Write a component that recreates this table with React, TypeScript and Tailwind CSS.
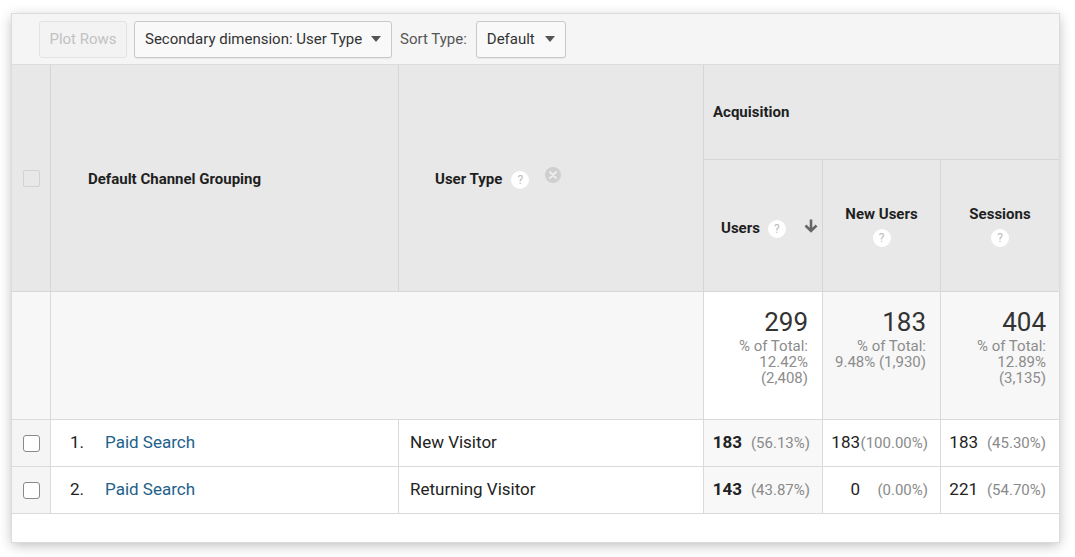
import React from "react";

const font = { fontFamily: "Roboto, 'Liberation Sans', sans-serif" };

function Help() {
  return (
    <span className="inline-flex h-[18px] w-[18px] items-center justify-center rounded-full bg-white text-[12px] font-normal leading-none text-[#bdbdbd]">
      ?
    </span>
  );
}

function Caret() {
  return (
    <svg width="10" height="6" viewBox="0 0 10 6" className="fill-[#555]">
      <path d="M0 0h10L5 6z" />
    </svg>
  );
}

function Cell({ value, pct, bold, bg }: { value: string; pct: string; bold?: boolean; bg: string }) {
  return (
    <div className={`flex items-center justify-end border-b border-r border-[#dadada] pr-3 text-[17px] text-[#222] ${bg}`}>
      <span className={bold ? "font-bold" : ""}>{value}</span>
      <span className="w-[68px] text-right text-[15px] text-[#8a8a8a]">{pct}</span>
    </div>
  );
}

function Total({ value, lines, bg }: { value: string; lines: string[]; bg: string }) {
  return (
    <div className={`flex flex-col items-end border-b border-r border-[#dadada] pr-[14px] pt-[14px] ${bg}`}>
      <span className="text-[26px] leading-[32px] text-[#333]">{value}</span>
      {lines.map((l) => (
        <span key={l} className="text-[15px] leading-[16px] text-[#8c8c8c]">
          {l}
        </span>
      ))}
    </div>
  );
}

const rows = [
  { n: "1.", ch: "Paid Search", type: "New Visitor", users: ["183", "(56.13%)"], nu: ["183", "(100.00%)"], s: ["183", "(45.30%)"] },
  { n: "2.", ch: "Paid Search", type: "Returning Visitor", users: ["143", "(43.87%)"], nu: ["0", "(0.00%)"], s: ["221", "(54.70%)"] },
];

export default function App() {
  return (
    <div className="min-h-[557px] w-[1075px] bg-white pl-[12px] pt-[14px]" style={font}>
      <div className="w-[1047px] bg-white shadow-[0_0_0_1px_#dcdcdc,0_3px_12px_rgba(0,0,0,0.28)]">
        {/* toolbar */}
        <div className="flex h-[51px] items-center border-b border-[#dcdcdc] bg-[#f5f5f5] pl-[27px] text-[15px]">
          <button className="h-[37px] w-[88px] rounded-[3px] border border-[#e2e2e2] bg-[#f3f3f3] text-[#c2c2c2]">
            Plot Rows
          </button>
          <div className="ml-[7px] flex h-[37px] w-[258px] items-center justify-between rounded-[3px] border border-[#c9c9c9] bg-[#f9f9f9] pl-[10px] pr-[10px] text-[#333] shadow-[0_1px_1px_rgba(0,0,0,0.06)]">
            <span>Secondary dimension: User Type</span>
            <Caret />
          </div>
          <span className="ml-[8px] text-[#555]">Sort Type:</span>
          <div className="ml-[9px] flex h-[37px] w-[90px] items-center justify-between rounded-[3px] border border-[#c9c9c9] bg-[#f9f9f9] pl-[10px] pr-[10px] text-[#333] shadow-[0_1px_1px_rgba(0,0,0,0.06)]">
            <span>Default</span>
            <Caret />
          </div>
        </div>

        {/* header */}
        <div className="grid grid-cols-[39px_348px_305px_119px_118px_118px] grid-rows-[95px_132px] bg-[#e8e8e8] text-[15px] font-bold text-[#1f1f1f]">
          <div className="row-span-2 flex items-center justify-center border-b border-r border-[#d6d6d6]">
            <span className="h-[17px] w-[17px] rounded-[2px] border border-[#d2d2d2]" />
          </div>
          <div className="row-span-2 flex items-center border-b border-r border-[#d6d6d6] pl-[37px] pt-[3px]">
            Default Channel Grouping
          </div>
          <div className="row-span-2 flex items-center border-b border-r border-[#d6d6d6] pl-[36px] pt-[3px]">
            <span>User Type</span>
            <span className="ml-[9px]">
              <Help />
            </span>
            <svg width="16" height="16" viewBox="0 0 16 16" className="mb-[10px] ml-[16px]">
              <circle cx="8" cy="8" r="8" fill="#cfcfcf" />
              <path d="M5 5l6 6M11 5l-6 6" stroke="#ececec" strokeWidth="2" strokeLinecap="round" />
            </svg>
          </div>
          <div className="col-span-3 flex items-center border-b border-[#d6d6d6] pl-[9px] pt-[1px]">Acquisition</div>
          <div className="flex items-center border-b border-r border-[#d6d6d6] pl-[17px] pr-[3px] pt-[6px]">
            <span>Users</span>
            <span className="ml-[8px]">
              <Help />
            </span>
            <svg width="16" height="16" viewBox="0 0 16 16" className="mb-[5px] ml-auto">
              <path d="M8 1.5v11M2.5 7.5L8 13l5.5-5.5" stroke="#666" strokeWidth="2.6" fill="none" />
            </svg>
          </div>
          <div className="flex flex-col items-center justify-center gap-[6px] border-b border-r border-[#d6d6d6]">
            <span className="leading-[18px]">New Users</span>
            <Help />
          </div>
          <div className="flex flex-col items-center justify-center gap-[6px] border-b border-[#d6d6d6]">
            <span className="leading-[18px]">Sessions</span>
            <Help />
          </div>
        </div>

        {/* totals */}
        <div className="grid h-[128px] grid-cols-[39px_653px_119px_118px_118px]">
          <div className="border-b border-r border-[#dadada] bg-[#f7f7f7]" />
          <div className="border-b border-r border-[#dadada] bg-[#f7f7f7]" />
          <Total value="299" lines={["% of Total:", "12.42%", "(2,408)"]} bg="bg-white" />
          <Total value="183" lines={["% of Total:", "9.48% (1,930)"]} bg="bg-[#f7f7f7]" />
          <div className="flex flex-col items-end border-b border-[#dadada] bg-[#f7f7f7] pr-[13px] pt-[14px]">
            <span className="text-[26px] leading-[32px] text-[#333]">404</span>
            <span className="text-[15px] leading-[16px] text-[#8c8c8c]">% of Total:</span>
            <span className="text-[15px] leading-[16px] text-[#8c8c8c]">12.89%</span>
            <span className="text-[15px] leading-[16px] text-[#8c8c8c]">(3,135)</span>
          </div>
        </div>

        {/* rows */}
        {rows.map((r) => (
          <div key={r.n} className="grid h-[47px] grid-cols-[39px_348px_305px_119px_118px_118px] text-[17px] text-[#222]">
            <div className="flex items-center justify-center border-b border-r border-[#dadada] bg-[#f5f5f5]">
              <span className="h-[17px] w-[17px] rounded-[3px] border border-[#8a8a8a] bg-white" />
            </div>
            <div className="flex items-center border-b border-r border-[#dadada] pl-[19px]">
              <span className="w-[35px]">{r.n}</span>
              <span className="text-[#22618a]">{r.ch}</span>
            </div>
            <div className="flex items-center border-b border-r border-[#dadada] pl-[11px]">{r.type}</div>
            <Cell value={r.users[0]} pct={r.users[1]} bold bg="bg-[#f8f8f8]" />
            <Cell value={r.nu[0]} pct={r.nu[1]} bg="bg-white" />
            <div className="flex items-center justify-end border-b border-[#dadada] pr-[13px] text-[17px] text-[#222]">
              <span>{r.s[0]}</span>
              <span className="w-[68px] text-right text-[15px] text-[#8a8a8a]">{r.s[1]}</span>
            </div>
          </div>
        ))}
        <div className="h-[28px]" />
      </div>
    </div>
  );
}
